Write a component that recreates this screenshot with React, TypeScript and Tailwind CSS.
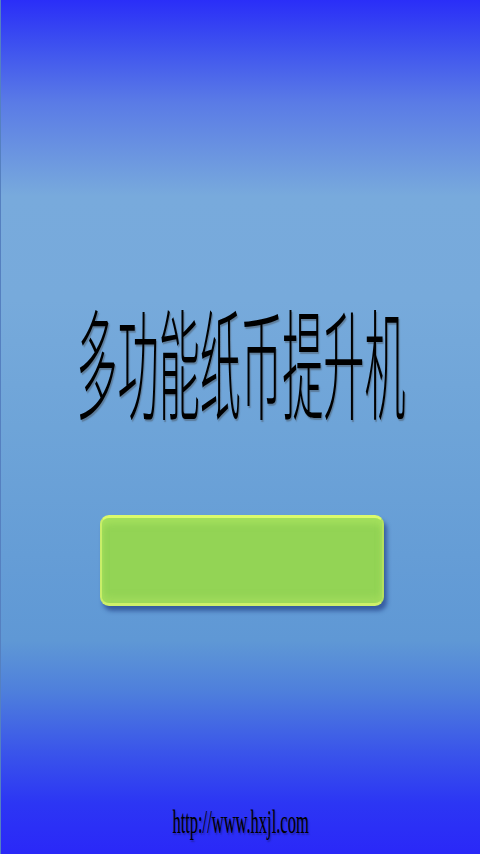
import React from "react";

export default function App() {
  return (
    <div
      className="w-[480px] h-[854px] flex flex-col items-center overflow-hidden border-l border-[#5580c0]"
      style={{
        background:
          "linear-gradient(to bottom, #2a2ef8 0%, #3c4ff0 5%, #5a7be6 12%, #78aadc 23%, #77aadb 35%, #6ea4d8 50%, #659dd6 65%, #5f98d5 75%, #4e7fdc 81%, #3a55ea 88%, #2c36f4 94%, #2a28f8 100%)",
      }}
    >
      <div className="mt-[296px] h-[126px] w-full flex items-center justify-center">
        <span
          className="inline-block whitespace-nowrap text-black leading-none font-extralight scale-x-[0.343] [text-shadow:3px_2px_2px_rgba(60,60,60,0.4)]"
          style={{ fontFamily: '"Noto Sans CJK SC", sans-serif', fontSize: "120px" }}
        >
          多功能纸币提升机
        </span>
      </div>
      <div className="mt-[93px] w-[284px] h-[91px] rounded-[9px] bg-[#93d455] border-t-[3px] border-b-[3px] border-l-[2px] border-r-[2px] border-t-[#dcfa6c] border-b-[#cdf06a] border-l-[#c8ee68] border-r-[#b4e060] shadow-[3px_5px_4px_rgba(30,60,130,0.65),inset_0_6px_6px_rgba(180,235,100,0.5),inset_0_-6px_6px_rgba(170,225,95,0.5)] ml-[2px]" />
      <div className="mt-auto mb-[12px] h-[40px] w-full flex items-center justify-center">
        <span
          className="inline-block whitespace-nowrap text-black leading-none scale-x-[0.485] [text-shadow:2px_2px_2px_rgba(20,20,60,0.35)]"
          style={{ fontFamily: '"Liberation Serif", serif', fontSize: "34px" }}
        >
          http://www.hxjl.com
        </span>
      </div>
    </div>
  );
}
